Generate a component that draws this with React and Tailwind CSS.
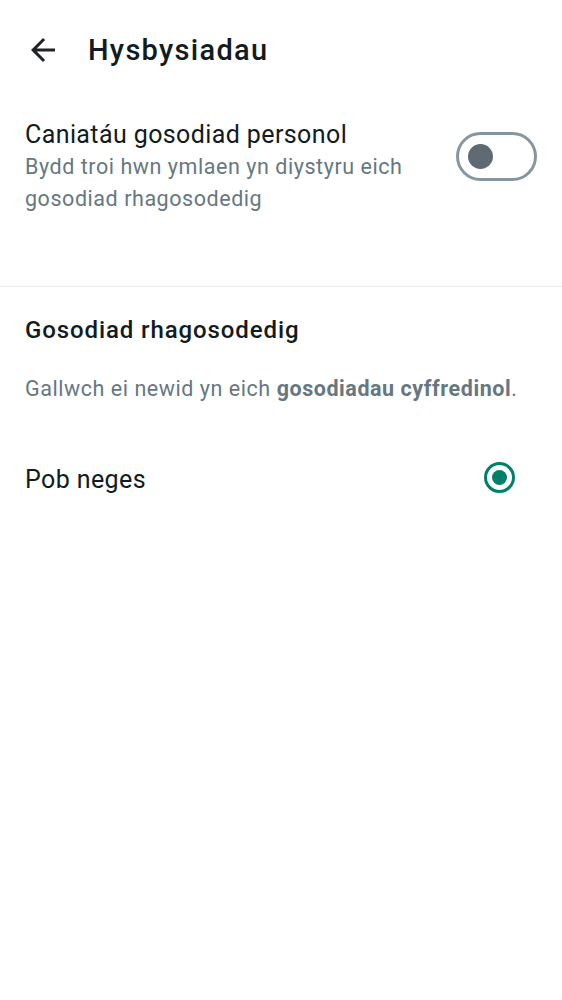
export default function App() {
  return (
    <div className="w-[562px] h-[1000px] bg-white" style={{ fontFamily: "Roboto, 'Noto Sans', sans-serif" }}>
      <div className="h-[100px] flex items-center">
        <div className="w-[36px] h-[36px] ml-[25px] flex items-center justify-center">
          <svg width="36" height="36" viewBox="0 0 24 24" fill="#1f2326">
            <path d="M20 11H7.83l5.59-5.59L12 4l-8 8 8 8 1.41-1.41L7.83 13H20v-2z" />
          </svg>
        </div>
        <div className="ml-[27px] text-[29px] leading-[36px] font-medium tracking-[1.3px] text-[#111b21]">Hysbysiadau</div>
      </div>

      <div className="flex items-start pl-[25px] pr-[25px] pt-[19px] pb-[71px]">
        <div className="flex-1">
          <div className="text-[25px] leading-[32px] tracking-[0.4px] text-[#111b21]">Caniatáu gosodiad personol</div>
          <div className="text-[21.5px] leading-[32px] tracking-[0.55px] text-[#667781]">
            Bydd troi hwn ymlaen yn diystyru eich
            <br />
            gosodiad rhagosodedig
          </div>
        </div>
        <div className="mt-[13px] w-[81px] h-[49px] rounded-full border-[3px] border-[#8696a0] flex items-center pl-[9px]">
          <div className="w-[25px] h-[25px] rounded-full bg-[#5f6a72]" />
        </div>
      </div>

      <div className="h-px bg-[#e9edef]" />

      <div className="px-[25px] pt-[27px]">
        <div className="text-[24px] leading-[32px] font-medium tracking-[0.9px] text-[#111b21]">Gosodiad rhagosodedig</div>
        <div className="mt-[27px] text-[21.5px] leading-[32px] tracking-[0.55px] text-[#667781]">
          Gallwch ei newid yn eich <span className="font-bold">gosodiadau cyffredinol</span>.
        </div>
        <div className="mt-[57px] flex items-center justify-between">
          <div className="text-[25px] leading-[32px] tracking-[0.4px] text-[#111b21]">Pob neges</div>
          <div className="mr-[22px] mb-[4px] w-[31px] h-[31px] rounded-full border-[3px] border-[#008069] flex items-center justify-center">
            <div className="w-[15px] h-[15px] rounded-full bg-[#008069]" />
          </div>
        </div>
      </div>
    </div>
  );
}
